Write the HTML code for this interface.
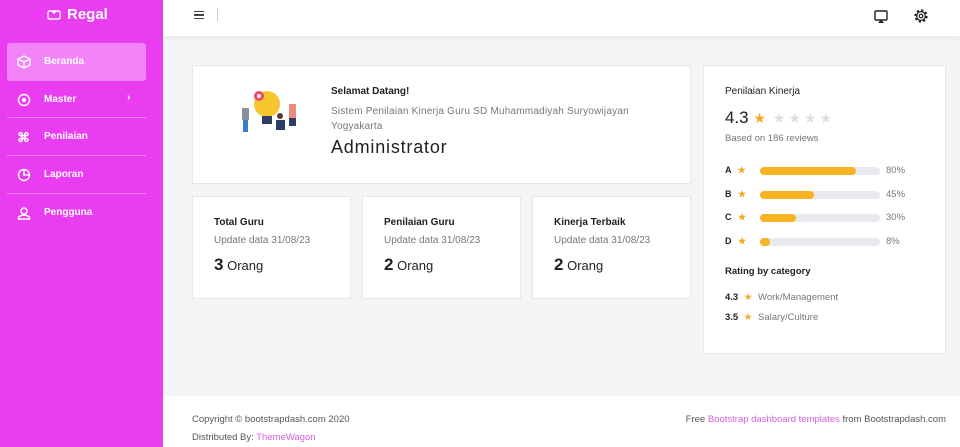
<!DOCTYPE html>
<html><head><meta charset="utf-8"><style>
*{margin:0;padding:0;box-sizing:border-box}
body{width:960px;height:447px;overflow:hidden;font-family:"Liberation Sans",sans-serif;background:#f4f5f7;position:relative;color:#1f1f1f}
.sb{position:absolute;left:0;top:0;width:163px;height:447px;background:#ea3df2}
.logo{position:absolute;left:47px;top:6px;color:#fff;font-size:15px;font-weight:bold}
.nav{position:absolute;left:7px;width:139px;height:38px;color:#fff;font-size:10px;font-weight:bold}
.nav span{position:absolute;left:37px;top:13px}
.nav svg{position:absolute;left:10px;top:12px}
.sep{position:absolute;left:7px;width:139px;height:1px;background:rgba(255,255,255,.35)}
.top{position:absolute;left:163px;top:0;width:797px;height:36px;background:#fff;box-shadow:0 2px 6px rgba(0,0,0,.06)}
.card{position:absolute;background:#fff;border:1px solid #e6e8ec}
.t{position:absolute;font-size:10px}
.g{color:#777}
.bar{position:absolute;left:760px;width:120px;height:8px;border-radius:4px;background:#e8eaee}
.bar i{display:block;height:8px;border-radius:4px;background:#f7b322}
.st{color:#f5a623}
.foot{position:absolute;left:163px;top:396px;width:797px;height:51px;background:#fff}
</style></head><body>
<div class="sb">
<div class="logo"><svg width="14" height="12" viewBox="0 0 14 12" style="vertical-align:-1px;margin-right:6px"><rect x="1" y="3" width="12" height="8" rx="1.5" fill="none" stroke="#fff" stroke-width="1.4"/><path d="M5 3 L7 5 L9 3" fill="none" stroke="#fff" stroke-width="1.4"/></svg>Regal</div>
<div class="nav" style="top:43px;background:#f383f8;border-radius:3px"><svg width="14" height="14" viewBox="0 0 14 14"><path d="M7 1 L13 4 L13 10 L7 13 L1 10 L1 4Z M1 4 L7 7 L13 4 M7 7 V13" fill="none" stroke="#fff" stroke-width="1.3"/></svg><span>Beranda</span></div>
<div class="nav" style="top:81px"><svg width="14" height="14"><circle cx="7" cy="7" r="5.5" fill="none" stroke="#fff" stroke-width="1.4"/><circle cx="7" cy="7" r="2" fill="#fff"/></svg><span>Master</span><span style="left:120px;top:11px">›</span></div>
<div class="sep" style="top:117px"></div>
<div class="nav" style="top:118px"><svg width="14" height="14"><text x="0" y="12" fill="#fff" font-size="13">⌘</text></svg><span>Penilaian</span></div>
<div class="sep" style="top:155px"></div>
<div class="nav" style="top:156px"><svg width="14" height="14"><circle cx="7" cy="7" r="5.5" fill="none" stroke="#fff" stroke-width="1.4"/><path d="M7 1.5 V7 H12.5" fill="none" stroke="#fff" stroke-width="1.4"/></svg><span>Laporan</span></div>
<div class="sep" style="top:193px"></div>
<div class="nav" style="top:194px"><svg width="14" height="14"><circle cx="7" cy="5" r="3" fill="none" stroke="#fff" stroke-width="1.4"/><path d="M1.5 13 V11 Q7 7 12.5 11 V13Z" fill="none" stroke="#fff" stroke-width="1.4"/></svg><span>Pengguna</span></div>
</div>
<div class="top">
<div style="position:absolute;left:31px;top:11px;width:10px;height:8px;border-top:1.5px solid #444;border-bottom:1.5px solid #444"><div style="margin-top:2px;height:1.5px;background:#444"></div></div>
<div style="position:absolute;left:54px;top:8px;width:1px;height:14px;background:#ccc"></div>
<svg style="position:absolute;left:710px;top:9px" width="16" height="16" viewBox="0 0 16 16"><rect x="2" y="2" width="12" height="9" rx="1" fill="none" stroke="#222" stroke-width="1.4"/><path d="M5 14 L8 10.5 L11 14Z" fill="#222"/></svg>
<svg style="position:absolute;left:750px;top:8px" width="16" height="16" viewBox="0 0 16 16"><circle cx="8" cy="8" r="5.5" fill="none" stroke="#222" stroke-width="2.2" stroke-dasharray="2.2 2.1"/><circle cx="8" cy="8" r="4.3" fill="#fff" stroke="#222" stroke-width="1.2"/><circle cx="8" cy="8" r="1.8" fill="none" stroke="#222" stroke-width="1.2"/></svg>
</div>
<div class="card" style="left:192px;top:65px;width:499px;height:119px">
<svg style="position:absolute;left:40px;top:20px" width="72" height="52"><circle cx="34" cy="18" r="13" fill="#f7c52c"/><rect x="29" y="30" width="10" height="8" fill="#2c3e66"/><circle cx="26" cy="10" r="5" fill="#e84b6a"/><circle cx="26" cy="10" r="2" fill="#fff"/><rect x="9" y="22" width="7" height="12" fill="#8a8fa0"/><rect x="10" y="34" width="5" height="12" fill="#3b7bd1"/><rect x="56" y="18" width="7" height="14" fill="#ef8b7a"/><rect x="56" y="32" width="7" height="8" fill="#2c3e66"/><rect x="43" y="34" width="9" height="10" fill="#2c3e66"/><circle cx="47" cy="30" r="3" fill="#5a3b2e"/></svg>
<div class="t" style="left:138px;top:20px;font-weight:bold">Selamat Datang!</div>
<div class="t g" style="left:138px;top:38px;line-height:15px;width:320px;letter-spacing:.2px">Sistem Penilaian Kinerja Guru SD Muhammadiyah Suryowijayan Yogyakarta</div>
<div class="t" style="left:138px;top:71px;font-size:18px;letter-spacing:.8px">Administrator</div>
</div>
<div class="card" style="left:192px;top:196px;width:159px;height:103px"><div class="t" style="left:21px;top:20px;font-weight:bold">Total Guru</div><div class="t g" style="left:21px;top:38px">Update data 31/08/23</div><div class="t" style="left:21px;top:58px;font-size:13px"><b style="font-size:17px">3</b> Orang</div></div>
<div class="card" style="left:362px;top:196px;width:159px;height:103px"><div class="t" style="left:21px;top:20px;font-weight:bold">Penilaian Guru</div><div class="t g" style="left:21px;top:38px">Update data 31/08/23</div><div class="t" style="left:21px;top:58px;font-size:13px"><b style="font-size:17px">2</b> Orang</div></div>
<div class="card" style="left:532px;top:196px;width:159px;height:103px"><div class="t" style="left:21px;top:20px;font-weight:bold">Kinerja Terbaik</div><div class="t g" style="left:21px;top:38px">Update data 31/08/23</div><div class="t" style="left:21px;top:58px;font-size:13px"><b style="font-size:17px">2</b> Orang</div></div>
<div class="card" style="left:703px;top:65px;width:243px;height:289px"></div>
<div class="t" style="left:725px;top:86px">Penilaian Kinerja</div>
<div class="t" style="left:725px;top:108px;font-size:17px">4.3 <span class="st" style="font-size:14px">★</span><span style="color:#dcdee2;font-size:14px;letter-spacing:3px"> ★★★★</span></div>
<div class="t g" style="left:725px;top:133px;font-size:9.5px">Based on 186 reviews</div>
<div class="t" style="left:725px;top:165px;font-size:9px;font-weight:bold">A <span class="st" style="margin-left:4px">★</span></div><div class="bar" style="top:167px"><i style="width:96px"></i></div><div class="t g" style="left:886px;top:165px;font-size:9.5px">80%</div>
<div class="t" style="left:725px;top:189px;font-size:9px;font-weight:bold">B <span class="st" style="margin-left:4px">★</span></div><div class="bar" style="top:191px"><i style="width:54px"></i></div><div class="t g" style="left:886px;top:189px;font-size:9.5px">45%</div>
<div class="t" style="left:725px;top:212px;font-size:9px;font-weight:bold">C <span class="st" style="margin-left:4px">★</span></div><div class="bar" style="top:214px"><i style="width:36px"></i></div><div class="t g" style="left:886px;top:212px;font-size:9.5px">30%</div>
<div class="t" style="left:725px;top:236px;font-size:9px;font-weight:bold">D <span class="st" style="margin-left:4px">★</span></div><div class="bar" style="top:238px"><i style="width:10px"></i></div><div class="t g" style="left:886px;top:236px;font-size:9.5px">8%</div>
<div class="t" style="left:725px;top:266px;font-weight:bold;font-size:9.5px">Rating by category</div>
<div class="t" style="left:725px;top:292px;font-size:9.5px"><b>4.3</b> <span class="st" style="margin:0 3px">★</span> <span class="g">Work/Management</span></div>
<div class="t" style="left:725px;top:312px;font-size:9.5px"><b>3.5</b> <span class="st" style="margin:0 3px">★</span> <span class="g">Salary/Culture</span></div>
<div class="foot">
<div class="t" style="left:29px;top:18px;color:#555;font-size:9.5px">Copyright © bootstrapdash.com 2020</div>
<div class="t" style="left:29px;top:36px;color:#555;font-size:9.5px">Distributed By: <span style="color:#d75fe0">ThemeWagon</span></div>
<div class="t" style="right:14px;top:18px;color:#555;font-size:9.5px">Free <span style="color:#d75fe0">Bootstrap dashboard templates</span> from Bootstrapdash.com</div>
</div>
</body></html>
